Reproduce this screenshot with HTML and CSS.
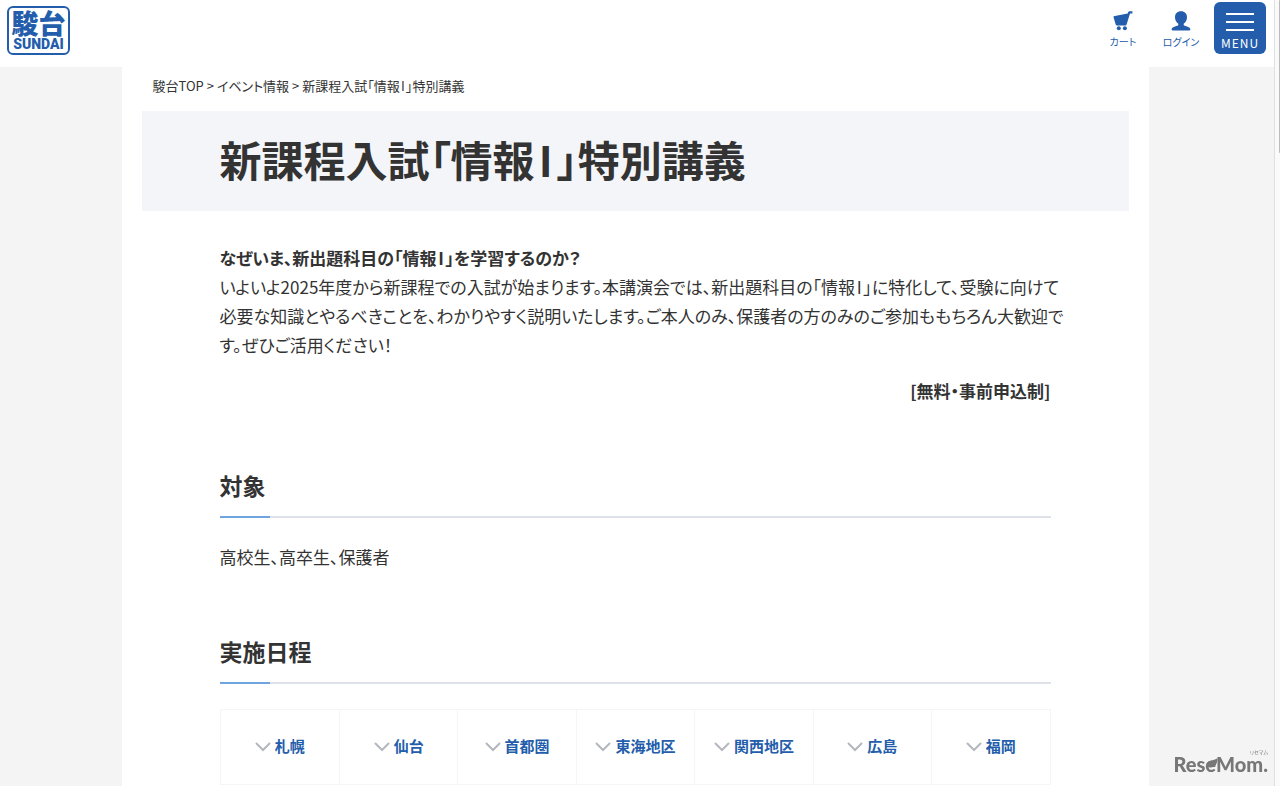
FILE: index.html
```html
<!DOCTYPE html>
<html lang="ja">
<head>
    <meta charset="UTF-8">
    <meta name="viewport" content="width=device-width, initial-scale=1.0">
    <title>新課程入試「情報I」特別講義</title>
    <link rel="stylesheet" href="styles.css">
</head>
<body>

<div class="page">
    <header class="header">
        <a class="logo" href="#">
            <span class="logo-kanji">駿台</span>
            <span class="logo-roman">SUNDAI</span>
        </a>
        <nav class="header-nav">
            <a class="header-link" href="#">
                <svg width="20" height="20" viewBox="0 0 20 20" fill="currentColor">
                    <path d="M.6 5.3 14.7 2.6 15.3.9Q15.6.2 16.4.2H19.4V2.6H17L13.6 13.6Q13.3 14.5 12.4 14.5H3.9Q3 14.5 2.7 13.6L.6 6.6Z"/>
                    <circle cx="5.8" cy="17.3" r="2"/>
                    <circle cx="11.9" cy="17.3" r="2"/>
                </svg>
                <span>カート</span>
            </a>
            <a class="header-link" href="#">
                <svg width="20" height="20" viewBox="0 0 20 20" fill="currentColor">
                    <path d="M10 .2C6.2.2 4 2.6 4 6.3C4 9 5.3 11.3 7.3 12.7V14.2C7 15 1 15.3.6 18.3Q.5 19.5 2 19.5H18Q19.5 19.5 19.4 18.3C19 15.3 13 15 12.7 14.2V12.7C14.7 11.3 16 9 16 6.3C16 2.6 13.8.2 10 .2Z"/>
                </svg>
                <span>ログイン</span>
            </a>
        </nav>
        <button class="menu-button" type="button">
            <span class="menu-line"></span>
            <span class="menu-line"></span>
            <span class="menu-line"></span>
            <span class="menu-label">MENU</span>
        </button>
    </header>

    <div class="background">
        <main class="container">
            <nav class="breadcrumb">
                <a href="#">駿台TOP</a> &gt; <a href="#">イベント情報</a> &gt; <span>新課程入試「情報<span class="numeral">I</span>」特別講義</span>
            </nav>

            <div class="title-area">
                <h1>新課程入試「情報<span class="numeral">I</span>」特別講義</h1>
            </div>

            <div class="content">
                <div class="lead">
                    <p><strong>なぜいま、新出題科目の「情報<span class="numeral">I</span>」を学習するのか？</strong></p>
                    <p class="lead-text">いよいよ2025年度から新課程での入試が始まります。本講演会では、新出題科目の「情報<span class="numeral">I</span>」に特化して、受験に向けて<br>必要な知識とやるべきことを、わかりやすく説明いたします。ご本人のみ、保護者の方のみのご参加ももちろん大歓迎で<br>す。ぜひご活用ください！</p>
                    <p class="note"><strong>[無料・事前申込制]</strong></p>
                </div>

                <section>
                    <h2>対象</h2>
                    <p>高校生、高卒生、保護者</p>
                </section>

                <section>
                    <h2>実施日程</h2>
                    <ul class="area-list">
                        <li><a href="#"><svg class="arrow" viewBox="0 0 16 10"><path d="M1.5 1.5 8 8 14.5 1.5"/></svg>札幌</a></li>
                        <li><a href="#"><svg class="arrow" viewBox="0 0 16 10"><path d="M1.5 1.5 8 8 14.5 1.5"/></svg>仙台</a></li>
                        <li><a href="#"><svg class="arrow" viewBox="0 0 16 10"><path d="M1.5 1.5 8 8 14.5 1.5"/></svg>首都圏</a></li>
                        <li><a href="#"><svg class="arrow" viewBox="0 0 16 10"><path d="M1.5 1.5 8 8 14.5 1.5"/></svg>東海地区</a></li>
                        <li><a href="#"><svg class="arrow" viewBox="0 0 16 10"><path d="M1.5 1.5 8 8 14.5 1.5"/></svg>関西地区</a></li>
                        <li><a href="#"><svg class="arrow" viewBox="0 0 16 10"><path d="M1.5 1.5 8 8 14.5 1.5"/></svg>広島</a></li>
                        <li><a href="#"><svg class="arrow" viewBox="0 0 16 10"><path d="M1.5 1.5 8 8 14.5 1.5"/></svg>福岡</a></li>
                    </ul>
                </section>
            </div>
        </main>
    </div>
</div>

<div class="scrollbar"><div class="scrollbar-thumb"></div></div>

<div class="watermark">
    <span class="watermark-ruby">リセマム</span>
    <span class="watermark-name">Res<span class="watermark-leaf">e<svg viewBox="0 0 12 12"><path d="M11.5 0C11.5 6 9 10 4 9.500C1 9 0 6.500 1.500 4.500C4 1.500 8 3 11.500 0Z"/></svg></span>Mom.</span>
</div>

</body>
</html>
```
FILE: styles.css
```css
* {
    box-sizing: border-box;
}

body {
    margin: 0;
    min-height: 100vh;
    display: flex;
    font-family: "Noto Sans CJK JP", sans-serif;
    font-feature-settings: "palt";
    font-size: 17px;
    line-height: 29px;
    color: #333;
    background-color: #fff;
}

a {
    color: inherit;
    text-decoration: none;
}

h1, h2, p, ul {
    margin: 0;
    padding: 0;
}

.page {
    flex: 1;
    display: flex;
    flex-direction: column;
}

/* Header */
.header {
    display: flex;
    align-items: flex-start;
    height: 67px;
    padding: 2px 8px 0 7px;
    color: #235dab;
}

.logo {
    display: flex;
    flex-direction: column;
    align-items: center;
    width: 63px;
    height: 49px;
    margin-top: 4px;
    border: 2px solid #235dab;
    border-radius: 6px;
}

.logo-kanji {
    font-size: 27px;
    font-weight: 900;
    line-height: 30px;
}

.logo-roman {
    font-family: Roboto, sans-serif;
    font-size: 14px;
    font-weight: 900;
    line-height: 13px;
}

.header-nav {
    display: flex;
    gap: 20px;
    margin: 9px 14px 0 auto;
}

.header-link {
    display: flex;
    flex-direction: column;
    align-items: center;
    min-width: 38px;
    font-size: 10px;
    line-height: 21px;
}

.menu-button {
    display: flex;
    flex-direction: column;
    align-items: center;
    gap: 6px;
    width: 52px;
    height: 52px;
    padding: 11px 0 0;
    font-family: inherit;
    color: #fff;
    background-color: #235dab;
    border: none;
    border-radius: 6px;
    cursor: pointer;
}

.menu-line {
    width: 28px;
    height: 2px;
    background-color: #fff;
}

.menu-label {
    font-size: 12px;
    line-height: 12px;
    letter-spacing: 1px;
}

/* Main column */
.background {
    flex: 1;
    padding-right: 4px;
    background-color: #f4f4f4;
}

.container {
    max-width: 1027px;
    min-height: 100%;
    margin: 0 auto;
    padding: 0 20px;
    background-color: #fff;
}

.numeral {
    padding: 0 0.1em;
}

.breadcrumb {
    padding: 4px 11px 11px;
    font-size: 13px;
}

.title-area {
    padding: 18px 78px 22px;
    background-color: #f3f5f8;
}

.title-area h1 {
    font-size: 42px;
    line-height: 60px;
}

.content {
    padding: 32px 78px 0;
}

.lead-text {
    white-space: nowrap;
}

.note {
    margin-top: 17px;
    text-align: right;
}

section {
    margin-top: 61px;
}

h2 {
    position: relative;
    margin-bottom: 24px;
    padding-bottom: 12px;
    font-size: 23px;
    line-height: 38px;
    border-bottom: 2px solid #dee1e8;
}

h2::after {
    content: "";
    position: absolute;
    left: 0;
    bottom: -2px;
    width: 50px;
    height: 2px;
    background-color: #6fa4de;
}

/* Area links */
.area-list {
    display: grid;
    grid-template-columns: repeat(7, 1fr);
    margin-top: 25px;
    list-style: none;
    border: 1px solid #f5f5f5;
}

.area-list li + li {
    border-left: 1px solid #f5f5f5;
}

.area-list a {
    display: flex;
    align-items: center;
    justify-content: center;
    gap: 4px;
    height: 74px;
    padding-bottom: 3px;
    font-size: 15px;
    font-weight: bold;
    color: #235dab;
}

.arrow {
    width: 16px;
    height: 10px;
    margin-top: 3px;
    fill: none;
    stroke: #b4b7be;
    stroke-width: 2;
    stroke-linecap: round;
}

/* Scrollbar */
.scrollbar {
    width: 6px;
    padding-left: 4px;
    background-color: #fafafa;
    border-left: 1px solid #dde0e5;
}

.scrollbar-thumb {
    height: 153px;
    background-color: #bbb;
    border-radius: 2px 0 0 2px;
}

/* Watermark */
.watermark {
    position: fixed;
    right: 12px;
    bottom: 12px;
    display: flex;
    flex-direction: column;
    align-items: flex-end;
    color: #777;
}

.watermark-ruby {
    font-size: 5px;
    line-height: 4px;
}

.watermark-name {
    font-family: Lato, sans-serif;
    font-size: 20px;
    font-weight: 900;
    line-height: 20px;
}

.watermark-leaf {
    position: relative;
}

.watermark-leaf svg {
    position: absolute;
    left: 1px;
    top: 6px;
    width: 12px;
    height: 12px;
    fill: #777;
}
```
